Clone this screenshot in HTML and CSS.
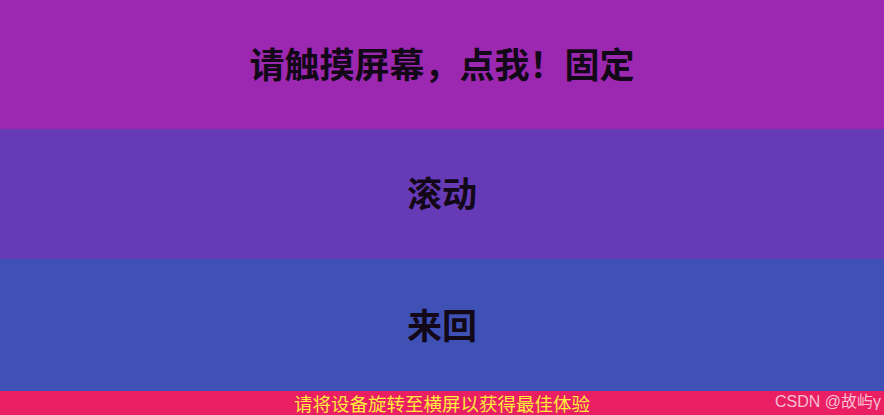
FILE: index.html
```html
<!DOCTYPE html>
<html>
<head>
<meta charset="utf-8">
<link rel="stylesheet" href="styles.css">
</head>
<body>
<div class="page">
  <div class="band band-fixed">请触摸屏幕，点我！固定</div>
  <div class="band band-scroll">滚动</div>
  <div class="band band-back">来回</div>
  <div class="tip">请将设备旋转至横屏以获得最佳体验</div>
  <div class="mark">CSDN @故屿γ</div>
</div>
</body>
</html>
```
FILE: styles.css
```css
html, body {
  margin: 0;
  padding: 0;
  width: 884px;
  height: 415px;
  overflow: hidden;
}
.page {
  position: relative;
  width: 884px;
  height: 415px;
  display: flex;
  flex-direction: column;
  font-family: "Noto Sans CJK SC", "Noto Sans", sans-serif;
}
.band {
  display: flex;
  align-items: center;
  justify-content: center;
  font-size: 35px;
  font-weight: 700;
  color: #120818;
  padding-bottom: 4px;
  box-sizing: border-box;
}
.band-fixed { background: #9c27b0; height: 128.5px; }
.band-scroll { background: #673ab7; height: 130.5px; }
.band-back { background: #3f51b5; flex: 1; }
.tip {
  height: 24px;
  background: #e91e63;
  color: #ffeb3b;
  font-size: 18.5px;
  line-height: 24px;
  text-align: center;
}
.mark {
  position: absolute;
  right: 3px;
  bottom: 4px;
  font-family: "Liberation Sans", "Noto Sans CJK SC", sans-serif;
  font-size: 16px;
  line-height: 18px;
  color: rgba(255, 255, 255, 0.72);
}
```
